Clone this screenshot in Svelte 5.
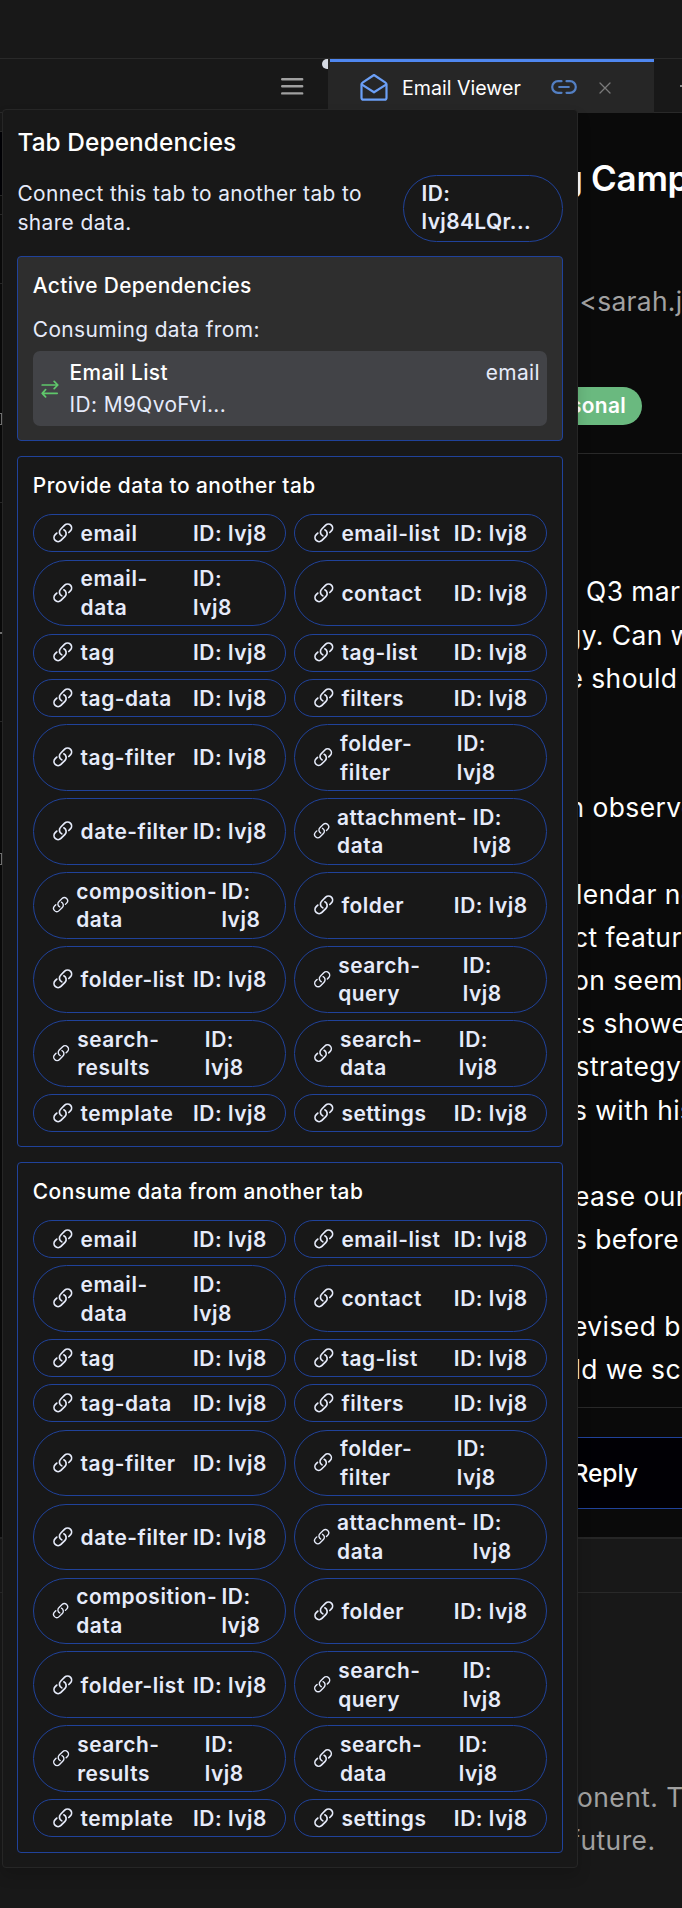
<script>
  const items = [
    { label: 'email' },
    { label: 'email-list' },
    { label: 'email-\ndata', wrap: true },
    { label: 'contact' },
    { label: 'tag' },
    { label: 'tag-list' },
    { label: 'tag-data' },
    { label: 'filters' },
    { label: 'tag-filter' },
    { label: 'folder-\nfilter', wrap: true, icon: 20.3, id: 71.4 },
    { label: 'date-filter' },
    { label: 'attachment-\ndata', wrap: true, icon: 17.3, id: 55.4 },
    { label: 'composition-\ndata', wrap: true, icon: 17.2, id: 46 },
    { label: 'folder' },
    { label: 'folder-list' },
    { label: 'search-\nquery', wrap: true, icon: 18.4, id: 65.4 },
    { label: 'search-\nresults', wrap: true, icon: 18.2, id: 62.6 },
    { label: 'search-\ndata', wrap: true, icon: 20.2, id: 69.4 },
    { label: 'template' },
    { label: 'settings' },
  ];
  const sections = ['Provide data to another tab', 'Consume data from another tab'];
  const lines = [
    [258, 'Q3 marketing'], [237, 'gy. Can we'], [239.5, 'e should'], [0, ''], [0, ''],
    [240.5, 'n observed'], [0, ''],
    [248, 'lendar now'], [245, 'ct features'], [245, 'on seems'], [244.5, 'ts showed'], [247.5, 'strategy'], [245, 's with his'],
    [0, ''], [246, 'ease our'], [245, 's before'], [0, ''], [244, 'evised bud'], [246.5, 'ld we sch'],
  ];
</script>

{#snippet chain()}
  <svg class="chain" viewBox="0 0 24 24" fill="none" stroke="currentColor" stroke-width="1.9" stroke-linecap="round" stroke-linejoin="round">
    <path d="M13.19 8.688a4.5 4.5 0 0 1 1.242 7.244l-4.5 4.5a4.5 4.5 0 0 1-6.364-6.364l1.757-1.757m13.35-.622 1.757-1.757a4.5 4.5 0 0 0-6.364-6.364l-4.5 4.5a4.5 4.5 0 0 0 1.242 7.244" />
  </svg>
{/snippet}

<div class="app">
  <header class="topbar"></header>
  <div class="strip">
    <div class="strip-left">
      <svg class="burger" viewBox="0 0 24 18" stroke="currentColor" stroke-width="2.4" stroke-linecap="round"><path d="M2.2 2.2h20M2.2 9.3h20M2.2 16.4h20" /></svg>
      <span class="dot"></span>
    </div>
    <div class="tab">
      <svg class="mail" viewBox="0 0 28 28" fill="none" stroke="currentColor" stroke-width="2.2" stroke-linejoin="round" stroke-linecap="round">
        <path d="M1.5 11.5a2 2 0 0 1 1-1.8L14 2l11.5 7.7a2 2 0 0 1 1 1.8v13.2a2 2 0 0 1-2 2h-21a2 2 0 0 1-2-2z" /><path d="m2 11.6 12 7.7 12-7.7" />
      </svg>
      <span class="tab-name">Email Viewer</span>
      <svg class="link" viewBox="0 0 26 14" fill="none" stroke="currentColor" stroke-width="2.2" stroke-linecap="round">
        <path d="M10.5 1.2H7a5.8 5.8 0 0 0 0 11.6h3.5M15.5 1.2H19a5.8 5.8 0 0 1 0 11.6h-3.5M8.2 7h9.6" />
      </svg>
      <svg class="close" viewBox="0 0 12 12" stroke="currentColor" stroke-width="1.3" stroke-linecap="round"><path d="m1 1 10 10M11 1 1 11" /></svg>
    </div>
    <div class="tab-next"><i></i></div>
  </div>

  <main class="main">
    <aside class="side">
      <div class="side-row r1"></div>
      <div class="side-row r2"></div>
      <div class="side-row r3"></div>
      <div class="side-row r4"></div>
      <div class="side-row r5"><b class="speck"></b></div>
      <div class="side-row r6"><b class="speck dash"></b></div>
      <div class="side-row r7"><b class="speck"></b></div>
    </aside>
    <section class="viewer">
      <div class="mail-head">
        <h1>g Campaign</h1>
        <p class="from">&lt;sarah.j@</p>
        <span class="badge">Personal</span>
      </div>
      <div class="mail-body">
        {#each lines as [x, text]}
          <p style:padding-left="{x}px">{text}</p>
        {/each}
      </div>
      <div class="actions"><button>Reply</button></div>
    </section>
  </main>
  <footer class="bottom">
    <div class="bottom-bar"></div>
    <div class="bottom-text">
      <p class="b1">onent. This</p>
      <p class="b2"><span>future.</span></p>
    </div>
  </footer>

  <div class="popover">
    <h2>Tab Dependencies</h2>
    <div class="intro">
      <p>Connect this tab to another tab to<br />share data.</p>
      <span class="pill own">ID:<br />lvj84LQr...</span>
    </div>
    <section class="box active">
      <h3>Active Dependencies</h3>
      <p class="sub">Consuming data from:</p>
      <div class="source">
        <svg class="swap" viewBox="0 0 18 18" fill="none" stroke="currentColor" stroke-width="1.7" stroke-linecap="round" stroke-linejoin="round">
          <path d="M1.2 5h15.5M13.2 1.4 16.8 5l-3.6 3.6M16.2 13.3H1.2M4.6 9.7 1.2 13.3l3.4 3.6" />
        </svg>
        <div class="names"><span class="name">Email List</span><span>ID: M9QvoFvi...</span></div>
        <span class="kind">email</span>
      </div>
    </section>
    {#each sections as title}
      <section class="box">
        <h3>{title}</h3>
        <div class="grid">
          {#each items as item}
            <button class="pill" style:grid-template-columns="{item.icon ?? 21.6}px 1fr {item.id ?? 74.4}px">
              {@render chain()}
              <span>{item.label}</span>
              <span>{item.wrap ? 'ID:\nlvj8' : 'ID: lvj8'}</span>
            </button>
          {/each}
        </div>
      </section>
    {/each}
  </div>
</div>

<style>
  :global(body) { background: #181818; }
  * { box-sizing: border-box; }
  p, h1, h2, h3 { margin: 0; font-weight: 400; }
  button { font: inherit; color: inherit; letter-spacing: inherit; }
  .app {
    position: relative; width: 682px; height: 1908px; overflow: hidden;
    background: #181818; color: #fff; font: 20.9px/28.8px Inter, sans-serif;
  }
  .topbar { height: 59px; border-bottom: 1px solid #292929; }
  .strip { display: flex; height: 54px; border-bottom: 1px solid #292929; }
  .strip-left { width: 328px; display: flex; }
  .burger { width: 24px; height: 18px; margin: 18px 0 0 279.5px; color: #a0a0a0; }
  .dot { width: 6px; height: 10px; margin-left: auto; background: #d5d9e2; border-radius: 6px 0 0 6px; }
  .tab {
    width: 326px; height: 54px; display: flex; align-items: flex-start; background: #262626;
    background-image: linear-gradient(#4f87f0, #4f87f0); background-size: 324px 3px; background-position: 2px 0; background-repeat: no-repeat;
  }
  .mail { width: 28px; height: 28px; margin: 14px 0 0 31.5px; color: #6b9ff6; }
  .tab-name { margin: 14.5px 0 0 14.5px; width: 124.5px; white-space: nowrap; font-size: 19.6px; }
  .link { width: 26px; height: 14px; margin: 21px 0 0 24px; color: #537fc3; }
  .close { width: 12px; height: 12px; margin: 23px 0 0 22.5px; color: #7a7a7a; }
  .tab-next { flex: 1; display: flex; justify-content: flex-end; }
  .tab-next i { width: 2px; height: 2px; margin-top: 26px; background: #888; }
  .main { display: flex; height: 1424px; background: #0a0a0a; }
  .side { width: 328px; display: flex; flex-direction: column; }
  .side-row { border-bottom: 1px solid #292929; }
  .r1 { height: 19px; background: #181818; }
  .r2 { height: 64px; background: #010005; }
  .r3 { height: 19px; }
  .r4 { height: 69px; }
  .r5 { height: 219px; padding-top: 129px; }
  .r6 { height: 219px; padding-top: 129px; }
  .r7 { flex: 1; border: 0; padding-top: 131px; }
  .speck { display: block; width: 2px; height: 12px; border: 1px solid #777; border-left: 0; }
  .dash { height: 2px; }
  .viewer { width: 354px; display: flex; flex-direction: column; overflow: hidden; white-space: nowrap; }
  .mail-head { height: 341px; padding-top: 40px; border-bottom: 1px solid #292929; display: flex; flex-direction: column; align-items: flex-start; }
  h1 { font-size: 35px; line-height: 50px; font-weight: 600; padding-left: 233px; letter-spacing: -0.3px; }
  .from { font-size: 26.4px; line-height: 43.2px; margin-top: 76.6px; padding-left: 251.5px; color: #a1a1a1; letter-spacing: 0.3px; }
  .badge { margin: 64px 0 0 202px; height: 38px; width: 112px; padding-right: 16px; line-height: 38px; text-align: right; border-radius: 19px; background: #6ab97f; font-weight: 600; letter-spacing: 0.3px; }
  .mail-body { height: 954px; padding-top: 116.4px; border-bottom: 1px solid #292929; font-size: 26.4px; line-height: 43.2px; letter-spacing: 0.45px; }
  .mail-body p { height: 43.2px; }
  .actions { padding-top: 29px; }
  .actions button {
    display: block; width: 400px; height: 72px; padding: 0 0 0 243.5px; text-align: left; border: 1px solid #20429a; background: #010005;
    font-size: 24.6px; font-weight: 500; letter-spacing: -0.1px;
  }
  .bottom { border-top: 2px solid #262626; height: 371px; }
  .bottom-bar { height: 54px; border-bottom: 1px solid #292929; }
  .bottom-text { padding: 182.5px 0 0 577px; font-size: 26.4px; line-height: 43.2px; color: #a1a1a1; letter-spacing: 0.45px; white-space: nowrap; }
  .b2 { display: flex; justify-content: flex-end; width: 78.5px; }

  .popover {
    position: absolute; left: 2px; top: 109px; width: 576px; height: 1759px; padding: 14.4px; border: 1px solid #262626; border-radius: 4px;
    background: #181818; box-shadow: 0 8px 14px rgba(0, 0, 0, 0.15); color: #e6ebfa; letter-spacing: 0.4px;
  }
  h2 { font-size: 24.4px; line-height: 36px; font-weight: 500; color: #fff; letter-spacing: 0.1px; }
  .intro { display: flex; align-items: center; justify-content: space-between; margin: 14.4px 0; white-space: nowrap; }
  .intro p { padding-top: 1.6px; }
  .pill { border: 1px solid #20429a; border-radius: 33.4px; background: none; padding: 4.8px 18px 2.4px; font-weight: 600; text-align: left; letter-spacing: 0.55px; }
  .own { width: 160px; padding: 3.9px 18px 3.3px; letter-spacing: 0.4px; }
  .box { border: 1px solid #20429a; border-radius: 4px; padding: 14.4px; margin-bottom: 14.8px; }
  .active { background: #2e2e2e; height: 185.5px; }
  h3 { font-size: 20.9px; line-height: 28.8px; font-weight: 500; color: #fff; padding-top: 0.8px; margin-bottom: 13.2px; letter-spacing: 0.46px; }
  .active h3 { letter-spacing: 0.35px; }
  .sub { margin-top: 14.8px; margin-bottom: 6.6px; }
  .source { display: flex; align-items: flex-start; padding: 7.4px 7.2px 0; height: 75px; background: #424347; border-radius: 7px; }
  .swap { width: 18px; height: 18px; margin: 21px 10px 0 1.5px; color: #5fc76b; }
  .names { display: flex; flex-direction: column; gap: 3.6px; flex: 1; }
  .name { color: #fff; font-weight: 500; }
  .grid { display: grid; grid-template-columns: 1fr 1fr; gap: 7.2px; }
  .grid .pill { display: grid; align-items: center; white-space: pre; min-width: 0; }
  .grid .pill span:nth-of-type(1) { padding-left: 7.2px; width: 0; }
  .grid .pill span:nth-of-type(2) { padding-left: 0; }
  .chain { width: 100%; display: block; margin-top: -3.2px; }
</style>
